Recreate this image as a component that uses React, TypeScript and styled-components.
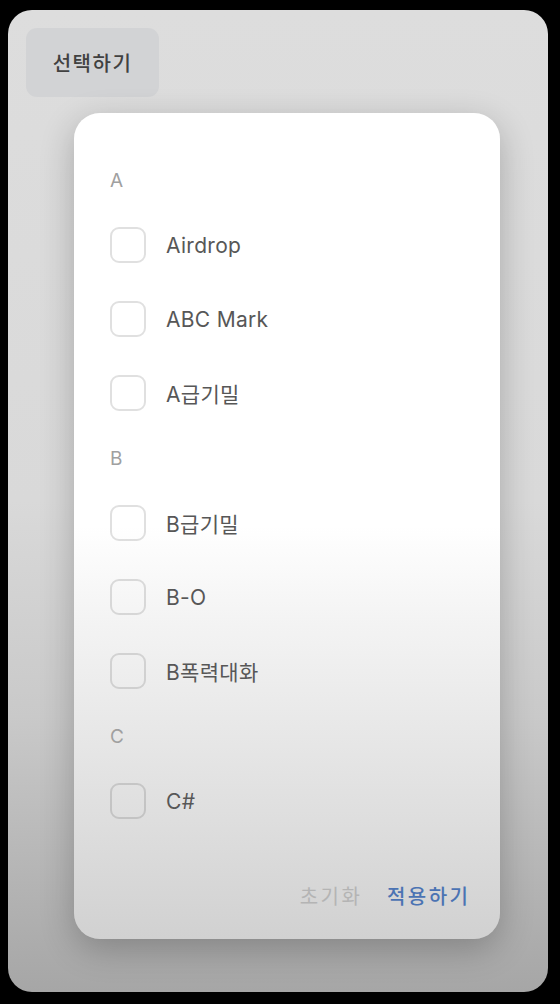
import React, { useState } from "react";
import styled, { createGlobalStyle } from "styled-components";

const GlobalStyle = createGlobalStyle`
  html, body {
    margin: 0;
    padding: 0;
    background: #000000;
  }
  body {
    font-family: Inter, "Noto Sans CJK KR", sans-serif;
  }
`;

const Screen = styled.div`
  width: 560px;
  height: 1004px;
  box-sizing: border-box;
  padding: 10px 12px 12px 8px;
`;

const Panel = styled.div`
  height: 100%;
  box-sizing: border-box;
  border-radius: 24px;
  padding: 18px 48px 0 18px;
  background: linear-gradient(
    #dddddd 0%,
    #d9d9d9 50%,
    #c9c9c9 72%,
    #a6a6a6 100%
  );
  display: flex;
  flex-direction: column;
`;

const TriggerButton = styled.button`
  align-self: flex-start;
  width: 133px;
  height: 69px;
  border: none;
  border-radius: 11px;
  background: #d2d3d5;
  color: #414141;
  font-family: Inter, "Noto Sans CJK KR", sans-serif;
  font-size: 20px;
  font-weight: 500;
  letter-spacing: 1.5px;
  cursor: pointer;
`;

const Card = styled.div`
  margin: 16px 0 0 48px;
  width: 426px;
  height: 826px;
  box-sizing: border-box;
  border-radius: 26px;
  padding: 40px 32px 24px 36px;
  background: linear-gradient(
    #ffffff 0%,
    #ffffff 50%,
    #f3f3f3 62%,
    #e3e3e3 80%,
    #d1d1d1 100%
  );
  box-shadow: 0 10px 34px rgba(0, 0, 0, 0.24);
  display: flex;
  flex-direction: column;
`;

const Section = styled.div`
  display: flex;
  flex-direction: column;
  & + & {
    margin-top: 1px;
  }
`;

const SectionTitle = styled.div`
  height: 55px;
  display: flex;
  align-items: center;
  font-size: 19px;
  color: #a0a0a0;
`;

const Row = styled.label`
  height: 74px;
  display: flex;
  align-items: center;
  gap: 20px;
  cursor: pointer;
`;

const Box = styled.span<{ $checked: boolean }>`
  width: 36px;
  height: 36px;
  box-sizing: border-box;
  border-radius: 9px;
  border: 2px solid ${(p) => (p.$checked ? "#4a74b8" : "rgba(0, 0, 0, 0.12)")};
  background: ${(p) => (p.$checked ? "#4a74b8" : "transparent")};
  flex-shrink: 0;
`;

const ItemLabel = styled.span`
  font-size: 21px;
  color: #575757;
  letter-spacing: 0.3px;
`;

const Footer = styled.div`
  margin-top: auto;
  height: 40px;
  display: flex;
  justify-content: flex-end;
  align-items: center;
  gap: 27px;
`;

const FooterButton = styled.button<{ $primary?: boolean }>`
  border: none;
  background: none;
  padding: 0;
  font-family: Inter, "Noto Sans CJK KR", sans-serif;
  font-size: 20px;
  letter-spacing: 2.5px;
  margin-right: -2.5px;
  font-weight: ${(p) => (p.$primary ? 500 : 400)};
  color: ${(p) => (p.$primary ? "#4b73b3" : "#b4b4b4")};
  cursor: pointer;
`;

const groups = [
  { title: "A", items: ["Airdrop", "ABC Mark", "A급기밀"] },
  { title: "B", items: ["B급기밀", "B-O", "B폭력대화"] },
  { title: "C", items: ["C#"] },
];

export default function App() {
  const [checked, setChecked] = useState<string[]>([]);

  const toggle = (name: string) =>
    setChecked((prev) =>
      prev.includes(name) ? prev.filter((n) => n !== name) : [...prev, name]
    );

  return (
    <Screen>
      <GlobalStyle />
      <Panel>
        <TriggerButton>선택하기</TriggerButton>
        <Card>
          {groups.map((g) => (
            <Section key={g.title}>
              <SectionTitle>{g.title}</SectionTitle>
              {g.items.map((item) => (
                <Row key={item} onClick={() => toggle(item)}>
                  <Box $checked={checked.includes(item)} />
                  <ItemLabel>{item}</ItemLabel>
                </Row>
              ))}
            </Section>
          ))}
          <Footer>
            <FooterButton onClick={() => setChecked([])}>초기화</FooterButton>
            <FooterButton $primary>적용하기</FooterButton>
          </Footer>
        </Card>
      </Panel>
    </Screen>
  );
}
